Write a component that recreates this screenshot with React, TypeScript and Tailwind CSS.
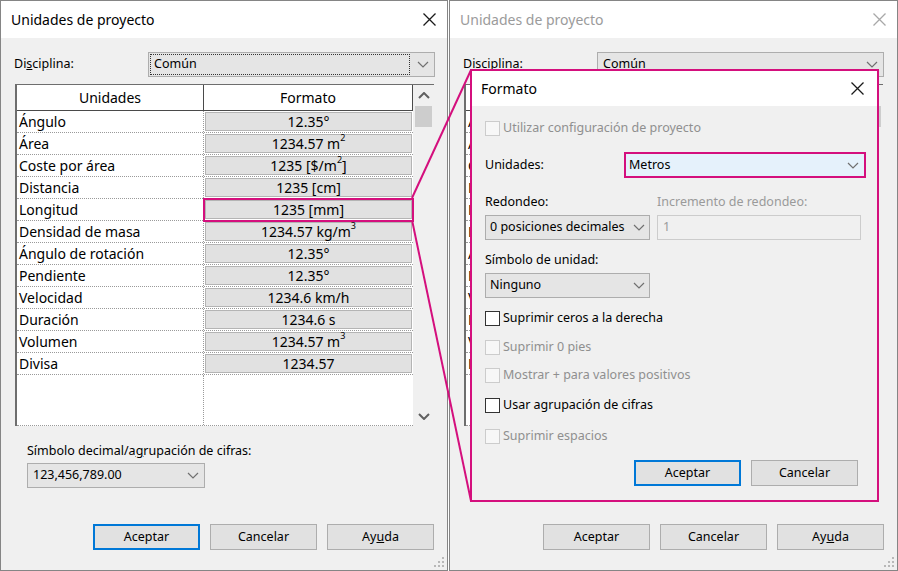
import React from 'react'

const MAG = '#d40f7d'

function Sup({ children }: { children: React.ReactNode }) {
  return <sup className="top-[-6px] text-[9px]">{children}</sup>
}

const rows: [string, React.ReactNode][] = [
  ['Ángulo', '12.35°'],
  ['Área', <>1234.57 m<Sup>2</Sup></>],
  ['Coste por área', <>1235 [$/m<Sup>2</Sup>]</>],
  ['Distancia', '1235 [cm]'],
  ['Longitud', '1235 [mm]'],
  ['Densidad de masa', <>1234.57 kg/m<Sup>3</Sup></>],
  ['Ángulo de rotación', '12.35°'],
  ['Pendiente', '12.35°'],
  ['Velocidad', '1234.6 km/h'],
  ['Duración', '1234.6 s'],
  ['Volumen', <>1234.57 m<Sup>3</Sup></>],
  ['Divisa', '1234.57'],
]

function Chevron({ up = false, bold = false }: { up?: boolean; bold?: boolean }) {
  return (
    <svg width="12" height="7" viewBox="0 0 12 7" className="block">
      <path
        d={up ? 'M1 6 L6 1 L11 6' : 'M1 1 L6 6 L11 1'}
        fill="none"
        stroke={bold ? '#606060' : '#707070'}
        strokeWidth={bold ? 2 : 1.2}
      />
    </svg>
  )
}

function CloseX({ color }: { color: string }) {
  return (
    <svg width="13" height="13" viewBox="0 0 13 13" className="block">
      <path d="M0.5 0.5 L12.5 12.5 M12.5 0.5 L0.5 12.5" stroke={color} strokeWidth="1.3" />
    </svg>
  )
}

function Grip() {
  return (
    <svg width="10" height="10" viewBox="0 0 10 10" className="absolute bottom-[3px] right-[3px]">
      {[
        [8, 0],
        [4, 4],
        [8, 4],
        [0, 8],
        [4, 8],
        [8, 8],
      ].map(([x, y]) => (
        <rect key={`${x}-${y}`} x={x} y={y} width="2" height="2" fill="#b8b8b8" />
      ))}
    </svg>
  )
}

function Button({ children, focus = false }: { children: React.ReactNode; focus?: boolean }) {
  return (
    <div
      className={
        focus
          ? 'flex h-[26px] w-[107px] items-center justify-center border-2 border-[#0078d7] bg-[#e1e1e1]'
          : 'flex h-[26px] w-[107px] items-center justify-center border border-[#adadad] bg-[#e1e1e1]'
      }
    >
      {children}
    </div>
  )
}

function Checkbox({ label, disabled = false }: { label: string; disabled?: boolean }) {
  return (
    <div className="flex h-[15px] items-center">
      <div
        className={
          disabled
            ? 'h-[15px] w-[15px] border border-[#cccccc] bg-[#f7f7f7]'
            : 'h-[15px] w-[15px] border border-[#333333] bg-white'
        }
      />
      <span className={disabled ? 'ml-[3px] whitespace-nowrap text-[#8f8f8f]' : 'ml-[3px] whitespace-nowrap'}>
        {label}
      </span>
    </div>
  )
}

function Scrollbar() {
  return (
    <div className="flex w-[21px] flex-col items-center bg-[#f0f0f0]">
      <div className="flex h-[21px] items-center justify-center">
        <Chevron up bold />
      </div>
      <div className="h-[21px] w-[17px] bg-[#cdcdcd]" />
      <div className="flex-1" />
      <div className="flex h-[20px] items-center justify-center">
        <Chevron bold />
      </div>
    </div>
  )
}

function UnitsTable({ highlight }: { highlight: boolean }) {
  return (
    <div className="ml-[14px] mt-[7px] flex h-[342px] w-[419px] border-l-2 border-t border-[#6e6e6e] bg-white text-[14px]">
      <div className="flex flex-1 flex-col border-b border-dotted border-[#9a9a9a]">
        <div className="flex h-[26px] shrink-0 border-b border-[#4a4a4a]">
          <div className="flex w-[187px] items-center justify-center border-r border-[#4a4a4a]">Unidades</div>
          <div className="flex flex-1 items-center justify-center border-r border-[#4a4a4a]">Formato</div>
        </div>
        {rows.map(([name, fmt], i) => (
          <div key={name} className="flex h-[22px] shrink-0 border-b border-dotted border-[#9a9a9a]">
            <div className="flex w-[187px] items-center border-r border-dotted border-[#9a9a9a] pl-[2px]">
              {name}
            </div>
            <div className="relative flex flex-1 p-[1px]">
              <div className="flex flex-1 items-center justify-center border border-[#b4b4b4] bg-[#e1e1e1] leading-none">
                {fmt}
              </div>
              {highlight && i === 4 && (
                <div className="absolute -left-px -right-px -top-px bottom-[-2px] border-2 border-[#d40f7d]" />
              )}
            </div>
          </div>
        ))}
        <div className="flex flex-1">
          <div className="w-[187px] border-r border-dotted border-[#9a9a9a]" />
        </div>
      </div>
      <Scrollbar />
    </div>
  )
}

function ProjectUnits({ active }: { active: boolean }) {
  return (
    <div className="relative flex h-[571px] flex-col border border-[#858585] bg-[#f0f0f0]">
      <div className="flex h-[37px] shrink-0 items-center justify-between bg-white pl-[10px] pr-[11px]">
        <span className={active ? 'text-[14px]' : 'text-[14px] text-[#9b9b9b]'}>Unidades de proyecto</span>
        <CloseX color={active ? '#1a1a1a' : '#a8a8a8'} />
      </div>

      <div className="mt-[14px] flex h-[25px] items-center pl-[13px]">
        <span className="w-[134px]">
          Di<span className="underline">s</span>ciplina:
        </span>
        <div className="flex h-[25px] w-[287px] items-center border border-[#adadad] bg-[#e5e5e5]">
          {active ? (
            <div className="m-[1px] flex h-[21px] flex-1 items-center border border-dotted border-[#333] pl-[3px]">
              Común
            </div>
          ) : (
            <div className="flex flex-1 items-center pl-[5px]">Común</div>
          )}
          <div className="flex w-[23px] items-center justify-center">
            <Chevron />
          </div>
        </div>
      </div>

      <UnitsTable highlight={active} />

      <div className="ml-[26px] mt-[16px] leading-[18px]">
        Símbolo decimal/a<span className="underline">g</span>rupación de cifras:
      </div>
      <div className="ml-[26px] mt-[3px] flex h-[25px] w-[178px] items-center border border-[#adadad] bg-[#e5e5e5] pl-[5px]">
        <span className="flex-1">123,456,789.00</span>
        <div className="flex w-[23px] items-center justify-center">
          <Chevron />
        </div>
      </div>

      <div className="mt-[36px] flex justify-end gap-[10px] pr-[13px]">
        <Button focus={active}>Aceptar</Button>
        <Button>Cancelar</Button>
        <Button>
          Ay<span className="underline">u</span>da
        </Button>
      </div>
      <Grip />
    </div>
  )
}

function Formato() {
  return (
    <div className="absolute left-[470px] top-[69px] flex h-[433px] w-[409px] flex-col border-2 border-[#d40f7d] bg-[#f0f0f0]">
      <div className="flex h-[35px] shrink-0 items-center justify-between bg-white pl-[9px] pr-[13px]">
        <span className="text-[14px]">Formato</span>
        <CloseX color="#1a1a1a" />
      </div>
      <div className="flex flex-1 flex-col pl-[13px]">
        <div className="mt-[15px]">
          <Checkbox label="Utilizar configuración de proyecto" disabled />
        </div>

        <div className="mt-[16px] flex items-center">
          <span className="w-[139px]">Unidades:</span>
          <div className="flex h-[26px] w-[242px] items-center border-2 border-[#d40f7d] bg-[#e5f1fb] pl-[3px]">
            <span className="flex-1">Metros</span>
            <div className="flex w-[22px] items-center justify-center">
              <Chevron />
            </div>
          </div>
        </div>

        <div className="mt-[15px] flex leading-[18px]">
          <span className="w-[172px]">Redondeo:</span>
          <span className="text-[#9a9a9a]">Incremento de redondeo:</span>
        </div>
        <div className="mt-[4px] flex">
          <div className="flex h-[25px] w-[165px] items-center border border-[#adadad] bg-[#e5e5e5] pl-[4px]">
            <span className="flex-1 whitespace-nowrap">0 posiciones decimales</span>
            <div className="flex w-[20px] items-center justify-center">
              <Chevron />
            </div>
          </div>
          <div className="ml-[7px] flex h-[25px] w-[204px] items-center border border-[#cccccc] bg-[#f0f0f0] pl-[5px] text-[#9a9a9a]">
            1
          </div>
        </div>

        <div className="mt-[11px] leading-[18px]">Símbolo de unidad:</div>
        <div className="mt-[4px] flex h-[25px] w-[165px] items-center border border-[#adadad] bg-[#e5e5e5] pl-[4px]">
          <span className="flex-1">Ninguno</span>
          <div className="flex w-[20px] items-center justify-center">
            <Chevron />
          </div>
        </div>

        <div className="mt-[13px]">
          <Checkbox label="Suprimir ceros a la derecha" />
        </div>
        <div className="mt-[14px]">
          <Checkbox label="Suprimir 0 pies" disabled />
        </div>
        <div className="mt-[13px]">
          <Checkbox label="Mostrar + para valores positivos" disabled />
        </div>
        <div className="mt-[15px]">
          <Checkbox label="Usar agrupación de cifras" />
        </div>
        <div className="mt-[16px]">
          <Checkbox label="Suprimir espacios" disabled />
        </div>

        <div className="mt-[16px] flex justify-end gap-[10px] pr-[19px]">
          <Button focus>Aceptar</Button>
          <Button>Cancelar</Button>
        </div>
      </div>
    </div>
  )
}

export default function App() {
  return (
    <div className="relative flex h-[571px] w-[898px] gap-[1px] overflow-hidden bg-white font-['Noto_Sans',sans-serif] text-[12.5px] text-black">
      <div className="w-[448px]">
        <ProjectUnits active />
      </div>
      <div className="w-[449px]">
        <ProjectUnits active={false} />
      </div>
      <Formato />
      <svg width="898" height="571" className="pointer-events-none absolute left-0 top-0">
        <line x1="412" y1="198" x2="471" y2="70" stroke={MAG} strokeWidth="2" />
        <line x1="412" y1="220" x2="471" y2="501" stroke={MAG} strokeWidth="2" />
      </svg>
    </div>
  )
}
